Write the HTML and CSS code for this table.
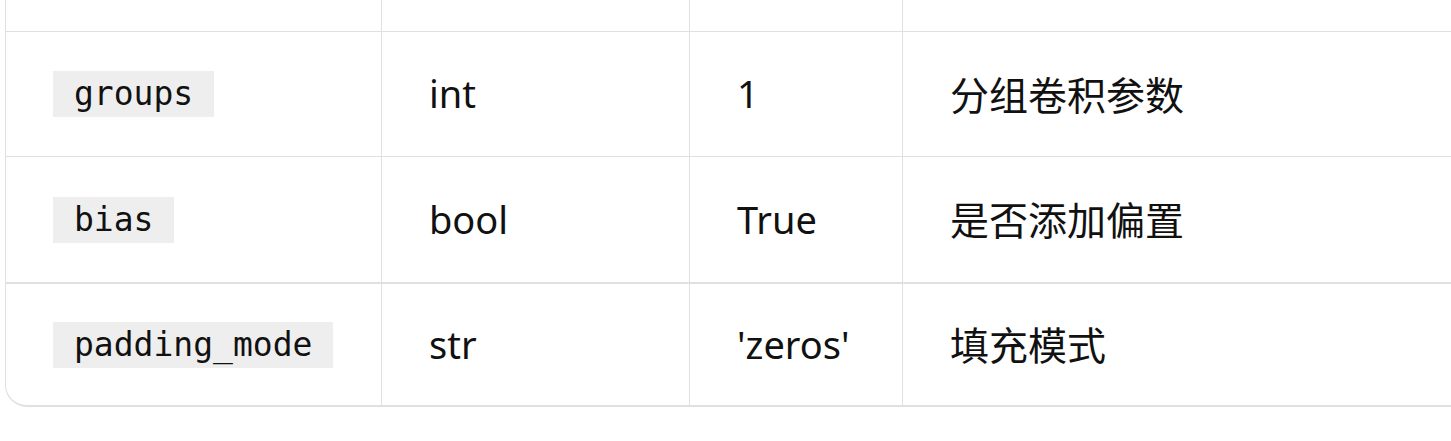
FILE: index.html
```html
<!DOCTYPE html>
<html lang="zh">
<head>
<meta charset="utf-8">
<title>参数表</title>
<link rel="stylesheet" href="styles.css">
</head>
<body>
<div class="viewport">
  <table class="params">
    <colgroup>
      <col class="c1"><col class="c2"><col class="c3"><col class="c4">
    </colgroup>
    <tbody>
      <tr class="partial">
        <td></td><td></td><td></td><td></td>
      </tr>
      <tr class="r1">
        <td class="name"><code>groups</code></td>
        <td>int</td>
        <td>1</td>
        <td><span class="zh">分组卷积参数</span></td>
      </tr>
      <tr class="r2">
        <td class="name"><code>bias</code></td>
        <td>bool</td>
        <td>True</td>
        <td><span class="zh">是否添加偏置</span></td>
      </tr>
      <tr class="r3 last">
        <td class="name"><code>padding_mode</code></td>
        <td>str</td>
        <td>'zeros'</td>
        <td><span class="zh">填充模式</span></td>
      </tr>
    </tbody>
  </table>
</div>
</body>
</html>
```

FILE: styles.css
```css
html, body {
  margin: 0;
  padding: 0;
  background: #ffffff;
}

body {
  overflow: hidden;
  font-family: "Noto Sans", "Noto Sans CJK SC", sans-serif;
  color: #111111;
}

.viewport {
  padding-left: 5px;
  width: 1600px;
}

.params {
  border-collapse: separate;
  border-spacing: 0;
  width: 1560px;
  table-layout: fixed;
  border-left: 1px solid #e0e0e0;
  border-bottom: 2px solid #e0e0e0;
  border-bottom-left-radius: 22px;
  font-size: 38px;
  line-height: 1.2;
}

.c1 { width: 376px; }
.c2 { width: 308px; }
.c3 { width: 213px; }
.c4 { width: auto; }

.params td {
  padding: 0 47px;
  border-right: 1px solid #e0e0e0;
  border-bottom: 1px solid #e0e0e0;
  vertical-align: middle;
  text-align: left;
  white-space: nowrap;
}

.params td:last-child {
  border-right: none;
}

.params tr.partial td { height: 31px; }
.params tr.r1 td { height: 124px; }
.params tr.r2 td { height: 125px; border-bottom-width: 2px; }
.params tr.r3 td { height: 121px; border-bottom: none; }

.params td.name {
  line-height: 0;
}

.zh {
  font-family: "Noto Sans CJK SC", sans-serif;
  font-size: 39px;
}

.params code {
  display: inline-block;
  vertical-align: top;
  font-family: "DejaVu Sans Mono", monospace;
  font-size: 33px;
  line-height: 46px;
  padding: 0 21px;
  background: #eeeeee;
  color: #111111;
}
```
